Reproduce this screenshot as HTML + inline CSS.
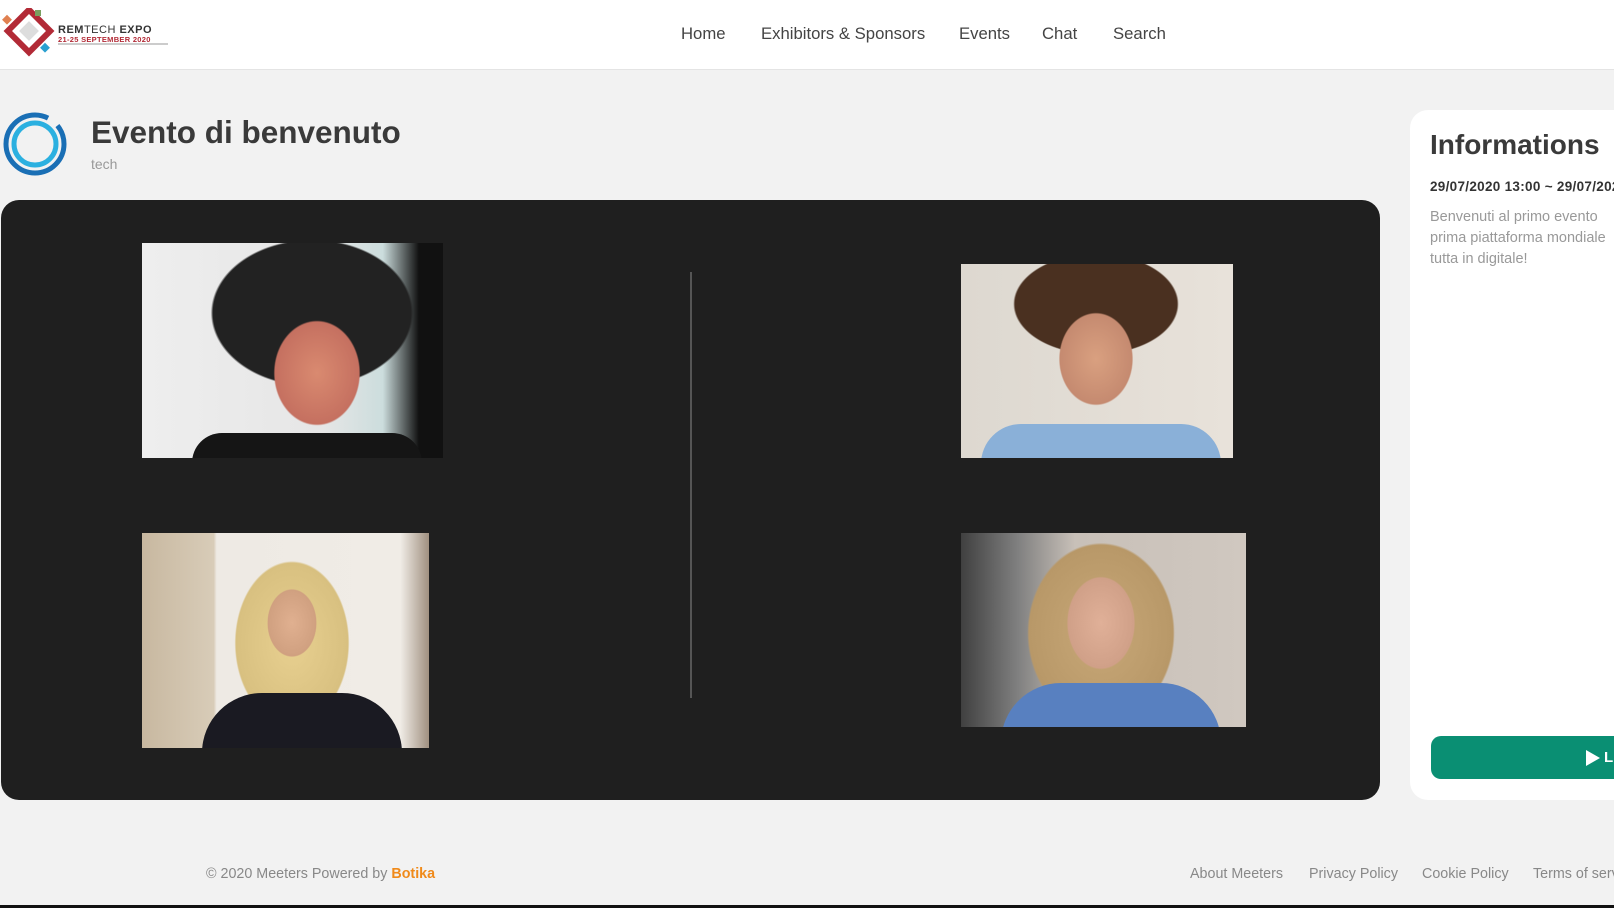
<!DOCTYPE html>
<html><head><meta charset="utf-8"><style>
*{margin:0;padding:0;box-sizing:border-box}
body{width:1614px;height:908px;overflow:hidden;background:#f2f2f2;font-family:"Liberation Sans",sans-serif;position:relative;color:#333}
.hdr{position:absolute;left:0;top:0;width:1614px;height:70px;background:#fff;border-bottom:1px solid #e4e4e4}
.nav{position:absolute;top:24px;font-size:16.7px;color:#444}
.a{position:absolute}
.vid{position:absolute;overflow:hidden}
.ft{position:absolute;top:866px;font-size:14.3px;color:#888}
</style></head><body>
<div class="hdr">
<svg class="a" style="left:2px;top:8px" width="58" height="52" viewBox="0 0 58 52">
<rect x="12" y="8" width="30" height="30" transform="rotate(45 27 23)" fill="none" stroke="#b22a36" stroke-width="6"/>
<rect x="20" y="16" width="14" height="14" transform="rotate(45 27 23)" fill="#ddd"/>
<rect x="2" y="8" width="7" height="7" fill="#e08050" transform="rotate(45 5 11)"/>
<rect x="33" y="2" width="6" height="6" fill="#7aa060"/>
<rect x="40" y="36" width="7" height="7" fill="#2aa0d0" transform="rotate(45 43 39)"/>
</svg>
<div class="a" style="left:58px;top:24px;font-size:11px;font-weight:bold;color:#333;letter-spacing:0.5px">REM<span style="font-weight:normal">TECH</span> EXPO</div>
<div class="a" style="left:58px;top:35px;font-size:7.5px;font-weight:bold;color:#b22a36;letter-spacing:0.3px">21-25 SEPTEMBER 2020</div>
<div class="a" style="left:58px;top:43px;width:110px;height:2px;background:#ccc"></div>
<div class="nav" style="left:681px">Home</div>
<div class="nav" style="left:761px">Exhibitors &amp; Sponsors</div>
<div class="nav" style="left:959px">Events</div>
<div class="nav" style="left:1042px">Chat</div>
<div class="nav" style="left:1113px">Search</div>
</div>
<svg class="a" style="left:2px;top:111px" width="66" height="66" viewBox="0 0 66 66">
<circle cx="33" cy="33" r="29" fill="none" stroke="#1a6fb5" stroke-width="5" stroke-dasharray="150 12 20 8"/>
<circle cx="33" cy="33" r="21" fill="none" stroke="#2bb0e0" stroke-width="5"/>
</svg>
<div class="a" style="left:91px;top:114px;font-size:31.5px;font-weight:bold;color:#3a3a3a">Evento di benvenuto</div>
<div class="a" style="left:91px;top:156px;font-size:14px;color:#999">tech</div>
<div class="a" style="left:1px;top:200px;width:1379px;height:600px;background:#1f1f1f;border-radius:18px"></div>
<div class="a" style="left:690px;top:272px;width:2px;height:426px;background:#555"></div>
<div class="vid" style="left:142px;top:243px;width:301px;height:215px;background:radial-gradient(ellipse 70px 85px at 175px 130px,#d98a70 0,#c57060 60%,transparent 62%),radial-gradient(ellipse 110px 80px at 170px 70px,#222 0,#222 90%,transparent 92%),linear-gradient(90deg,#eee,#e6e6e6 60%,#cdd 80%,#111 92%)"><div class="a" style="left:50px;top:190px;width:230px;height:30px;background:#151515;border-radius:40px 40px 0 0"></div></div>
<div class="vid" style="left:961px;top:264px;width:272px;height:194px;background:radial-gradient(ellipse 60px 75px at 135px 95px,#d9a080 0,#c58a70 60%,transparent 62%),radial-gradient(ellipse 90px 55px at 135px 40px,#4a3020 0,#4a3020 90%,transparent 92%),linear-gradient(90deg,#ddd8d0,#e8e2da)"><div class="a" style="left:20px;top:160px;width:240px;height:40px;background:#8ab0d8;border-radius:50px 50px 0 0"></div></div>
<div class="vid" style="left:142px;top:533px;width:287px;height:215px;background:radial-gradient(ellipse 40px 55px at 150px 90px,#e0b090 0,#d0a080 60%,transparent 62%),radial-gradient(ellipse 70px 100px at 150px 110px,#e8d090 0,#d8c080 80%,transparent 82%),linear-gradient(90deg,#c8b8a0 0,#d8ccb8 25%,#eeeae4 26%,#f0ece6 90%,#a09080)"><div class="a" style="left:60px;top:160px;width:200px;height:60px;background:#1a1a22;border-radius:60px 60px 0 0"></div></div>
<div class="vid" style="left:961px;top:533px;width:285px;height:194px;background:radial-gradient(ellipse 55px 75px at 140px 90px,#e0b098 0,#d0a088 60%,transparent 62%),radial-gradient(ellipse 90px 110px at 140px 100px,#c8a878 0,#b89868 80%,transparent 82%),linear-gradient(90deg,#404040 0,#808080 20%,#c8c0b8 40%,#d0c8c0)"><div class="a" style="left:40px;top:150px;width:220px;height:60px;background:#5880c0;border-radius:60px 60px 0 0"></div></div>
<div class="a" style="left:1410px;top:110px;width:230px;height:690px;background:#fff;border-radius:18px"></div>
<div class="a" style="left:1430px;top:129px;font-size:28px;font-weight:bold;color:#3a3a3a;white-space:nowrap">Informations</div>
<div class="a" style="left:1430px;top:179px;font-size:13.5px;font-weight:bold;color:#333;white-space:nowrap;letter-spacing:0.3px">29/07/2020 13:00 ~ 29/07/2020</div>
<div class="a" style="left:1430px;top:207px;font-size:14.5px;color:#999;line-height:21px;white-space:nowrap">Benvenuti al primo evento<br>prima piattaforma mondiale<br>tutta in digitale!</div>
<div class="a" style="left:1431px;top:736px;width:200px;height:43px;background:#0a8f73;border-radius:10px"></div>
<svg class="a" style="left:1585px;top:749px" width="16" height="18"><path d="M1 1L15 9L1 17Z" fill="#fff"/></svg>
<div class="a" style="left:1604px;top:749px;font-size:15px;color:#fff;font-weight:bold">L</div>
<div class="ft" style="left:206px">© 2020 Meeters Powered by <b style="color:#f08a1a">Botika</b></div>
<div class="ft" style="left:1190px">About Meeters</div>
<div class="ft" style="left:1309px">Privacy Policy</div>
<div class="ft" style="left:1422px">Cookie Policy</div>
<div class="ft" style="left:1533px;white-space:nowrap">Terms of service</div>
<div class="a" style="left:0;top:905px;width:1614px;height:3px;background:#111"></div>
</body></html>
